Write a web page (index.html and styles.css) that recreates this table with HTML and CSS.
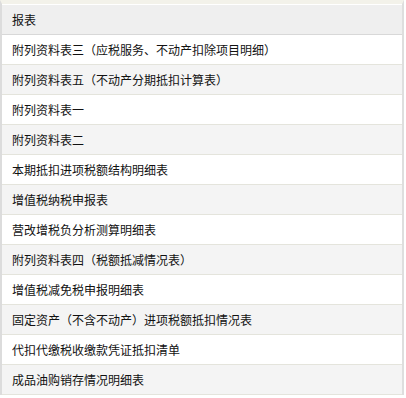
FILE: index.html
```html
<!DOCTYPE html>
<html lang="zh-CN">
<head>
<meta charset="utf-8">
<title>报表</title>
<link rel="stylesheet" href="styles.css">
</head>
<body>
<div class="panel">
  <div class="row head">报表</div>
  <div class="row">附列资料表三（应税服务、不动产扣除项目明细）</div>
  <div class="row alt">附列资料表五（不动产分期抵扣计算表）</div>
  <div class="row">附列资料表一</div>
  <div class="row alt">附列资料表二</div>
  <div class="row">本期抵扣进项税额结构明细表</div>
  <div class="row alt">增值税纳税申报表</div>
  <div class="row">营改增税负分析测算明细表</div>
  <div class="row alt">附列资料表四（税额抵减情况表）</div>
  <div class="row">增值税减免税申报明细表</div>
  <div class="row alt">固定资产（不含不动产）进项税额抵扣情况表</div>
  <div class="row">代扣代缴税收缴款凭证抵扣清单</div>
  <div class="row alt">成品油购销存情况明细表</div>
</div>
</body>
</html>
```

FILE: styles.css
```css
html, body {
  margin: 0;
  padding: 0;
  background: #ffffff;
}
body {
  font-family: "Noto Sans CJK SC", "Noto Sans", sans-serif;
  font-size: 12px;
  color: #111111;
}
.panel {
  width: 400px;
  margin-right: 4px;
  border-top: 4px solid #f3f2ea;
  border-left: 2px solid #dcdcdc;
  border-right: 2px solid #dedede;
  padding-top: 1px;
}
.row {
  height: 29px;
  line-height: 29px;
  padding-left: 10px;
  border-bottom: 1px solid #e4e4dc;
  background: #ffffff;
  white-space: nowrap;
}
.row.alt {
  background: #f4f4f4;
}
.row.head {
  background: #efefef;
  border-bottom: 1px solid #d8d8d8;
}
```
